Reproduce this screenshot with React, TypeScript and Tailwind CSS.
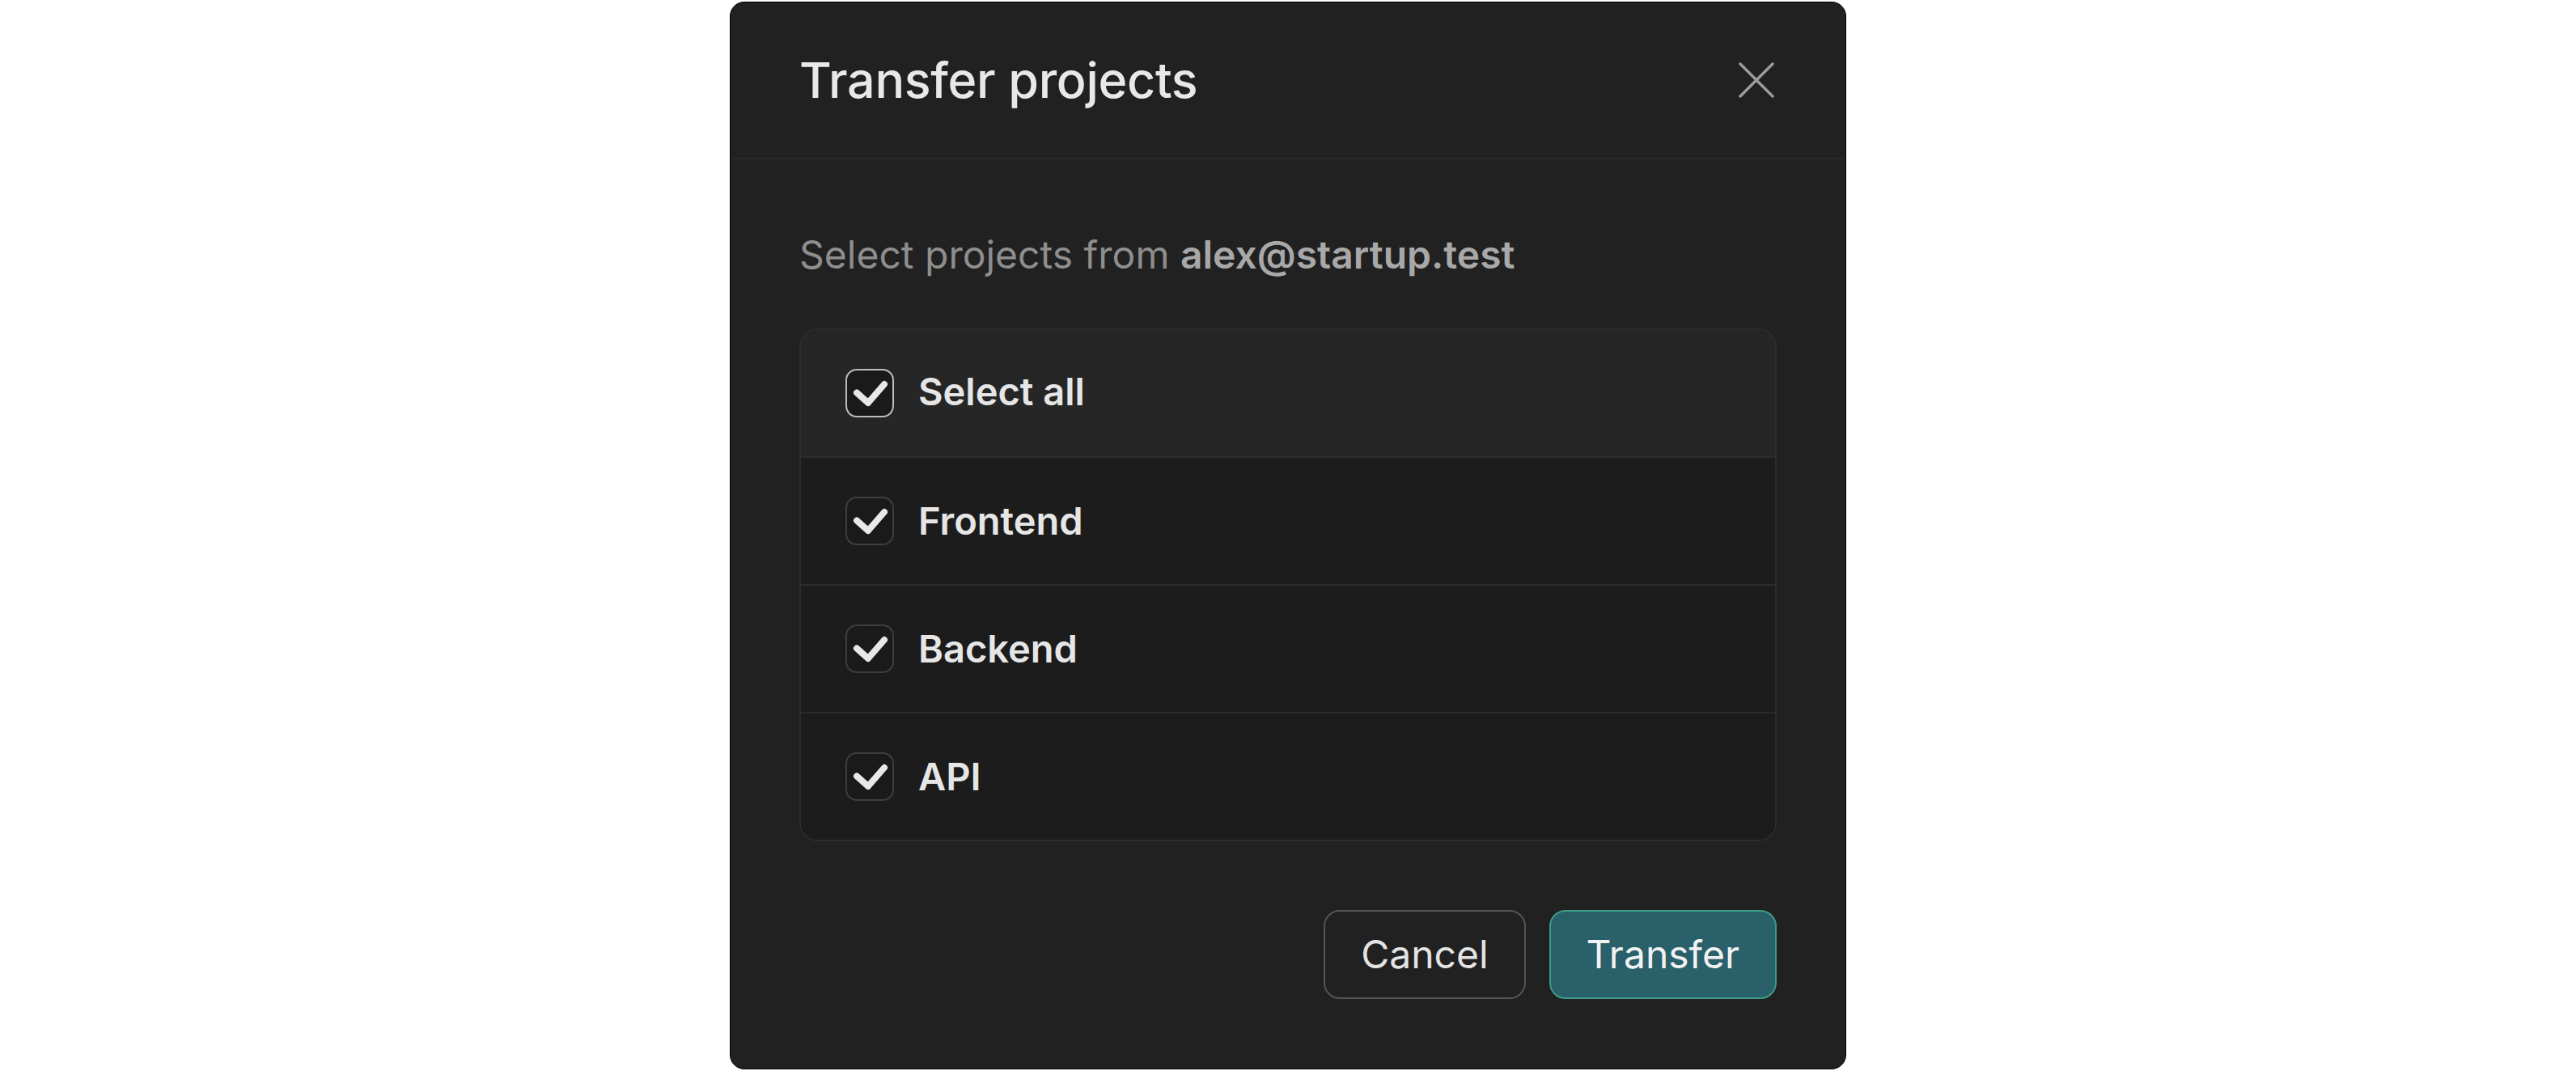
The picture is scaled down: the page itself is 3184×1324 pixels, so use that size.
const projects = ['Frontend', 'Backend', 'API']

function CheckBox({ strong }: { strong?: boolean }) {
  return (
    <div
      className={
        'w-[60px] h-[60px] rounded-[14px] border-2 bg-[#1a1a1a] flex items-center justify-center shrink-0 ' +
        (strong ? 'border-[#bdbdbd]' : 'border-[#3e3e3e]')
      }
    >
      <svg width="56" height="56" viewBox="0 0 56 56" fill="none">
        <path d="M12 27.5 26 40 46 17" stroke="#e8e8e8" strokeWidth="8" strokeLinecap="round" strokeLinejoin="round" />
      </svg>
    </div>
  )
}

export default function App() {
  return (
    <div className="min-h-[1324px] bg-white flex justify-center pt-[2px]" style={{ fontFamily: 'Inter, "Noto Sans", sans-serif' }}>
      <div className="w-[1380px] h-[1320px] bg-[#212121] rounded-[18px] border border-black flex flex-col">
        <div className="h-[194px] border-b-2 border-[#2a2a2a] flex items-center justify-between pl-[85px] pr-[88px]">
          <h2 className="text-[61px] font-medium text-[#e8e8e8] leading-none tracking-[-0.005em]">Transfer projects</h2>
          <svg width="44" height="44" viewBox="0 0 44 44" fill="none">
            <path d="M2 2 42 42M42 2 2 42" stroke="#9c9c9c" strokeWidth="3.4" strokeLinecap="round" />
          </svg>
        </div>

        <div className="px-[85px] pt-[86px]">
          <p className="text-[48px] leading-[64px] text-[#8e8e8e]">
            Select projects from <span className="font-semibold text-[#a8a8a8]">alex@startup.test</span>
          </p>

          <div className="mt-[59px] rounded-[22px] border-2 border-[#2c2c2c] overflow-hidden">
            <div className="h-[156px] bg-[#262626] flex items-center gap-[30px] pl-[55px]">
              <CheckBox strong />
              <span className="text-[47px] font-semibold text-[#e6e6e6] -mt-[3px]">Select all</span>
            </div>
            {projects.map((name) => (
              <div key={name} className="h-[158px] border-t-2 border-[#2c2c2c] bg-[#1c1c1c] flex items-center gap-[30px] pl-[55px]">
                <CheckBox />
                <span className="text-[47px] font-semibold text-[#e6e6e6]">{name}</span>
              </div>
            ))}
          </div>

          <div className="mt-[85px] flex justify-end gap-[29px]">
            <button className="h-[110px] px-[44px] rounded-[20px] border-2 border-[#545454] text-[48px] text-[#e4e4e4]">
              Cancel
            </button>
            <button className="h-[110px] px-[44px] rounded-[20px] border-2 border-[#3c9b89] bg-[#29606a] text-[48px] text-[#f2f2f2]">
              Transfer
            </button>
          </div>
        </div>
      </div>
    </div>
  )
}
